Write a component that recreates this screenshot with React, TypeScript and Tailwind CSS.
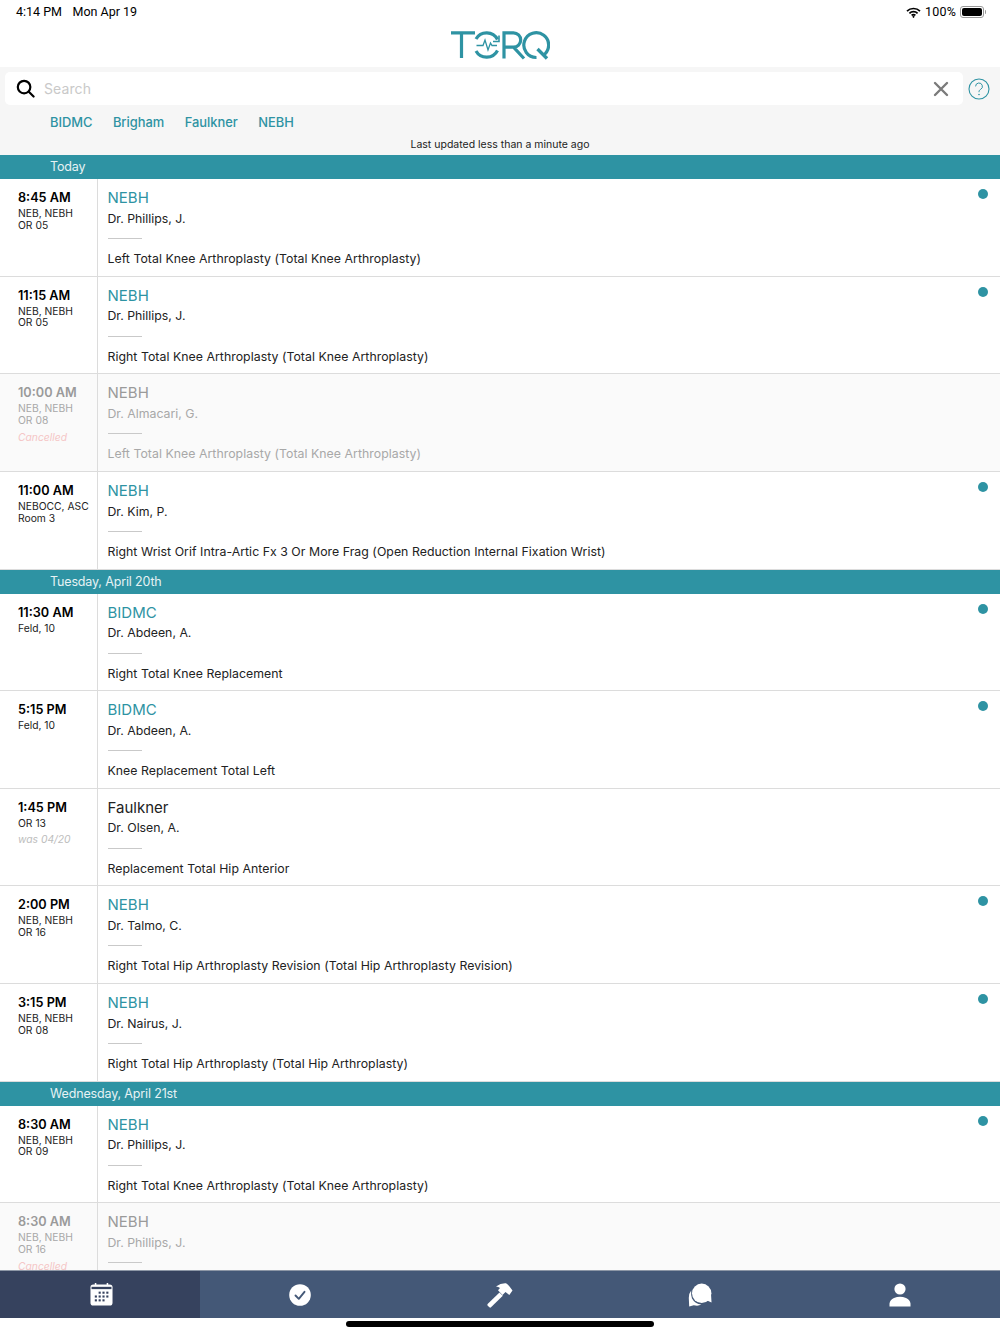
import React from "react";

type Appt = {
  time: string;
  place: string[];
  site: string;
  doctor: string;
  procedure: string;
  dot?: boolean;
  cancelled?: boolean;
  note?: string;
  plainSite?: boolean;
};

const FONT = "font-['Inter','Liberation_Sans',sans-serif]";

const sections: { title: string; rows: Appt[] }[] = [
  {
    title: "Today",
    rows: [
      { time: "8:45 AM", place: ["NEB, NEBH", "OR 05"], site: "NEBH", doctor: "Dr. Phillips, J.", procedure: "Left Total Knee Arthroplasty (Total Knee Arthroplasty)", dot: true },
      { time: "11:15 AM", place: ["NEB, NEBH", "OR 05"], site: "NEBH", doctor: "Dr. Phillips, J.", procedure: "Right Total Knee Arthroplasty (Total Knee Arthroplasty)", dot: true },
      { time: "10:00 AM", place: ["NEB, NEBH", "OR 08"], site: "NEBH", doctor: "Dr. Almacari, G.", procedure: "Left Total Knee Arthroplasty (Total Knee Arthroplasty)", cancelled: true },
      { time: "11:00 AM", place: ["NEBOCC, ASC", "Room 3"], site: "NEBH", doctor: "Dr. Kim, P.", procedure: "Right Wrist Orif Intra-Artic Fx 3 Or More Frag (Open Reduction Internal Fixation Wrist)", dot: true },
    ],
  },
  {
    title: "Tuesday, April 20th",
    rows: [
      { time: "11:30 AM", place: ["Feld, 10"], site: "BIDMC", doctor: "Dr. Abdeen, A.", procedure: "Right Total Knee Replacement", dot: true },
      { time: "5:15 PM", place: ["Feld, 10"], site: "BIDMC", doctor: "Dr. Abdeen, A.", procedure: "Knee Replacement Total Left", dot: true },
      { time: "1:45 PM", place: ["OR 13"], site: "Faulkner", doctor: "Dr. Olsen, A.", procedure: "Replacement Total Hip Anterior", note: "was 04/20", plainSite: true },
      { time: "2:00 PM", place: ["NEB, NEBH", "OR 16"], site: "NEBH", doctor: "Dr. Talmo, C.", procedure: "Right Total Hip Arthroplasty Revision (Total Hip Arthroplasty Revision)", dot: true },
      { time: "3:15 PM", place: ["NEB, NEBH", "OR 08"], site: "NEBH", doctor: "Dr. Nairus, J.", procedure: "Right Total Hip Arthroplasty (Total Hip Arthroplasty)", dot: true },
    ],
  },
  {
    title: "Wednesday, April 21st",
    rows: [
      { time: "8:30 AM", place: ["NEB, NEBH", "OR 09"], site: "NEBH", doctor: "Dr. Phillips, J.", procedure: "Right Total Knee Arthroplasty (Total Knee Arthroplasty)", dot: true },
      { time: "8:30 AM", place: ["NEB, NEBH", "OR 16"], site: "NEBH", doctor: "Dr. Phillips, J.", procedure: "Right Total Knee Arthroplasty (Total Knee Arthroplasty)", cancelled: true },
    ],
  },
];

function Logo() {
  return (
    <svg width="100" height="30" viewBox="0 0 100 30" fill="none" stroke="#2E93A3" strokeWidth="3.2">
      <path d="M1 2.8H25M11.5 2.8V28" />
      <path d="M26 9A12.2 12.2 0 0 1 47.5 9.5" />
      <path d="M26 21A12.2 12.2 0 0 0 47.5 20.5" />
      <path d="M49 5.5V11.5H43" strokeWidth="1.6" />
      <path d="M26.5 15.5H33L35 10L38 20L40.5 13L42 15.5H47" strokeWidth="1.3" />
      <path d="M54 28.5V2.8H63.5A7.2 7.2 0 0 1 63.5 17.2H55M63.5 17.2L74 28.5" />
      <path d="M93 25.5A12.4 12.4 0 1 0 86.5 27.5" />
      <path d="M87.5 19L97 28.5" strokeWidth="3.4" />
    </svg>
  );
}

function StatusBar() {
  return (
    <div className="flex h-[24px] items-center justify-between pl-[16px] pr-[14px] font-['Roboto',sans-serif] text-[12.5px] text-black">
      <div className="flex gap-[10.5px]">
        <span>4:14 PM</span>
        <span>Mon Apr 19</span>
      </div>
      <div className="flex items-center gap-[3px]">
        <svg width="15" height="11" viewBox="0 0 15 11" fill="none" stroke="#000" strokeWidth="1.7">
          <path d="M1 4.2A9.2 9.2 0 0 1 14 4.2" />
          <path d="M3.4 6.4A5.8 5.8 0 0 1 11.6 6.4" />
          <path d="M5.6 8.4A2.8 2.8 0 0 1 9.4 8.4" />
          <circle cx="7.5" cy="9.8" r="0.7" fill="#000" strokeWidth="0.8" />
        </svg>
        <span className="ml-[1px] tracking-[0.2px]">100%</span>
        <div className="ml-[1px] flex items-center">
          <div className="h-[12px] w-[24px] rounded-[3px] border border-[#999] p-[1px]">
            <div className="h-full w-full rounded-[2px] bg-black" />
          </div>
          <div className="ml-[1px] h-[4px] w-[1px] rounded-r bg-[#999]" />
        </div>
      </div>
    </div>
  );
}

function SearchBar() {
  return (
    <div className="flex items-center pl-[5px] pr-[10px] pt-[5px]">
      <div className="flex h-[33px] flex-1 items-center rounded-[5px] bg-white pl-[11px] pr-[14px]">
        <svg width="19" height="19" viewBox="0 0 20 20" fill="none" stroke="#000" strokeWidth="2.3" strokeLinecap="round">
          <circle cx="8.5" cy="8.5" r="6.6" />
          <path d="M13.5 13.5L18.5 18.5" />
        </svg>
        <span className="ml-[9px] flex-1 text-[14px] tracking-[0.1px] text-[#c9c9c9]">Search</span>
        <svg width="16" height="16" viewBox="0 0 16 16" stroke="#7b7b7b" strokeWidth="2.4" strokeLinecap="round">
          <path d="M2 2L14 14M14 2L2 14" />
        </svg>
      </div>
      <svg className="ml-[5px]" width="22" height="22" viewBox="0 0 22 22" fill="none" stroke="#2E93A3">
        <circle cx="11" cy="11" r="10" strokeWidth="1.1" />
        <path d="M7.6 8.4A3.4 3.4 0 1 1 12.6 11.4C11.4 12.1 11 12.8 11 14.2" strokeWidth="1" />
        <circle cx="11" cy="16.6" r="0.5" fill="#2E93A3" strokeWidth="0.6" />
      </svg>
    </div>
  );
}

function Row({ a }: { a: Appt }) {
  const muted = a.cancelled;
  return (
    <div className={`flex h-[97.65px] shrink-0 border-b border-[#dcdcdc] ${muted ? "bg-[#fafafa]" : "bg-white"}`}>
      <div className="w-[98px] shrink-0 border-r border-[#dcdcdc] pl-[18px] pt-[10px]">
        <div className={`whitespace-nowrap text-[12.7px] font-semibold leading-[17px] ${muted ? "text-[#9a9a9a]" : "text-black"}`}>{a.time}</div>
        <div className={`mt-[2px] text-[10.3px] leading-[11.7px] ${muted ? "text-[#a8a8a8]" : "text-[#222]"}`}>
          {a.place.map((p) => (
            <div key={p} className="whitespace-nowrap">{p}</div>
          ))}
        </div>
        {a.cancelled && <div className="mt-[4.5px] text-[10.3px] italic leading-[12px] text-[#f5c6c6]">Cancelled</div>}
        {a.note && <div className="mt-[3.5px] text-[10.3px] italic leading-[12px] text-[#bdbdbd]">{a.note}</div>}
      </div>
      <div className="relative flex-1 pl-[9.5px] pt-[9px]">
        <div className={`text-[15px] leading-[19px] ${muted ? "text-[#9a9a9a]" : a.plainSite ? "text-[#222]" : "text-[#2E93A3]"}`}>{a.site}</div>
        <div className={`mt-[1.6px] text-[12.3px] leading-[19px] ${muted ? "text-[#a8a8a8]" : "text-[#222]"}`}>{a.doctor}</div>
        <div className="mt-[10.4px] h-px w-[34px] bg-[#c9c9c9]" />
        <div className={`mt-[10px] whitespace-nowrap text-[12.3px] tracking-[0.04px] leading-[19px] ${muted ? "text-[#a8a8a8]" : "text-[#222]"}`}>{a.procedure}</div>
        {a.dot && <div className="absolute right-[12px] top-[10px] h-[10px] w-[10px] rounded-full bg-[#2E93A3]" />}
      </div>
    </div>
  );
}

function TabBar() {
  const fill = "#fff";
  return (
    <div className="flex h-[48px] shrink-0 border-t border-[#8d97a6] bg-[#445877]">
      <div className="flex w-[200px] items-center justify-center bg-[#36425E] pl-[2px]">
        <svg width="23" height="23" viewBox="0 0 24 24">
          <rect x="0.5" y="1.5" width="23" height="22" rx="3" fill={fill} />
          <rect x="1.6" y="4" width="20.8" height="2.4" fill="#36425E" />
          <rect x="5" y="0" width="1.6" height="3" fill={fill} />
          <rect x="17.4" y="0" width="1.6" height="3" fill={fill} />
          {[
            [10, 10], [14, 10], [18, 10],
            [6, 14], [10, 14], [14, 14], [18, 14],
            [6, 18], [10, 18], [14, 18],
          ].map(([x, y]) => (
            <rect key={`${x}-${y}`} x={x - 1} y={y - 1} width="2.2" height="2.2" fill="#36425E" />
          ))}
        </svg>
      </div>
      <div className="flex w-[200px] items-center justify-center">
        <svg width="22" height="22" viewBox="0 0 22 22">
          <circle cx="11" cy="11" r="10.8" fill={fill} />
          <path d="M6.5 11.5L9.8 14.8L15.5 7.8" fill="none" stroke="#445877" strokeWidth="1.9" strokeLinecap="round" strokeLinejoin="round" />
        </svg>
      </div>
      <div className="flex w-[200px] items-center justify-center">
        <svg width="26" height="26" viewBox="0 0 26 26" fill={fill}>
          <path d="M0.6 22L12.5 10.5L15.8 13.8L4 25.3Q3.2 26 2.4 25.3L0.7 23.7Q0 22.8 0.6 22Z" />
          <path d="M9 4.5Q14 0.8 19 1.2Q21 2 25.5 8.5L22.3 13L18.5 10L15.5 13L11 8.2L13 6Q11.5 4.8 9 4.5Z" />
        </svg>
      </div>
      <div className="flex w-[200px] items-center justify-center">
        <svg width="24" height="24" viewBox="0 0 24 24" fill={fill}>
          <circle cx="13.7" cy="10.3" r="9.7" />
          <path d="M18 17L23.5 19.6L23 11Z" />
          <path d="M3.2 7.5Q0.4 11 0.8 15L1.2 23.6L5.8 22.2Q10 23.4 13.4 21.6Q7 21 4 15.5Q2.8 12 3.2 7.5Z" />
        </svg>
      </div>
      <div className="flex w-[200px] items-center justify-center">
        <svg width="22" height="24" viewBox="0 0 22 24" fill={fill}>
          <circle cx="11" cy="6" r="5.6" />
          <path d="M0.5 23.5V20.5Q1 16.5 5 15Q11 12.5 17 15Q21 16.5 21.5 20.5V23.5Z" />
        </svg>
      </div>
    </div>
  );
}

export default function App() {
  return (
    <div className={`flex h-[1334px] w-[1000px] flex-col overflow-hidden bg-white ${FONT}`}>
      <StatusBar />
      <div className="flex h-[43px] shrink-0 items-start justify-center pt-[6px]">
        <Logo />
      </div>
      <div className="h-[88px] shrink-0 bg-[#f6f6f6]">
        <SearchBar />
        <div className="flex gap-[20.4px] pl-[50px] pt-[10px] text-[12.9px] font-medium leading-[16px] text-[#2E93A3]">
          <span>BIDMC</span>
          <span>Brigham</span>
          <span>Faulkner</span>
          <span>NEBH</span>
        </div>
        <div className="pt-[7px] text-center text-[10.5px] leading-[13px] text-[#222]">Last updated less than a minute ago</div>
      </div>
      <div className="flex min-h-0 flex-1 flex-col overflow-hidden">
        {sections.map((s) => (
          <React.Fragment key={s.title}>
            <div className="flex h-[24px] shrink-0 items-center bg-[#2E93A3] pl-[50px] pt-[1px] text-[12.5px] tracking-[-0.15px] text-[#e6f2f4]">{s.title}</div>
            {s.rows.map((a, i) => (
              <Row key={i} a={a} />
            ))}
          </React.Fragment>
        ))}
      </div>
      <TabBar />
      <div className="flex h-[16px] shrink-0 justify-center bg-white pt-[3px]">
        <div className="h-[5.5px] w-[308px] rounded-full bg-black" />
      </div>
    </div>
  );
}
